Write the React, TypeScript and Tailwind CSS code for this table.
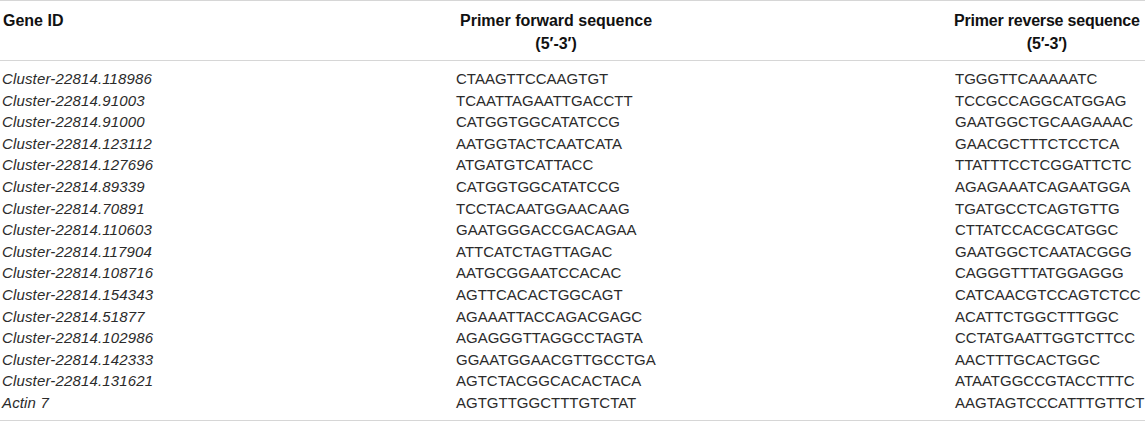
import React from "react";

const rows: [string, string, string][] = [
  ["Cluster-22814.118986", "CTAAGTTCCAAGTGT", "TGGGTTCAAAAATC"],
  ["Cluster-22814.91003", "TCAATTAGAATTGACCTT", "TCCGCCAGGCATGGAG"],
  ["Cluster-22814.91000", "CATGGTGGCATATCCG", "GAATGGCTGCAAGAAAC"],
  ["Cluster-22814.123112", "AATGGTACTCAATCATA", "GAACGCTTTCTCCTCA"],
  ["Cluster-22814.127696", "ATGATGTCATTACC", "TTATTTCCTCGGATTCTC"],
  ["Cluster-22814.89339", "CATGGTGGCATATCCG", "AGAGAAATCAGAATGGA"],
  ["Cluster-22814.70891", "TCCTACAATGGAACAAG", "TGATGCCTCAGTGTTG"],
  ["Cluster-22814.110603", "GAATGGGACCGACAGAA", "CTTATCCACGCATGGC"],
  ["Cluster-22814.117904", "ATTCATCTAGTTAGAC", "GAATGGCTCAATACGGG"],
  ["Cluster-22814.108716", "AATGCGGAATCCACAC", "CAGGGTTTATGGAGGG"],
  ["Cluster-22814.154343", "AGTTCACACTGGCAGT", "CATCAACGTCCAGTCTCC"],
  ["Cluster-22814.51877", "AGAAATTACCAGACGAGC", "ACATTCTGGCTTTGGC"],
  ["Cluster-22814.102986", "AGAGGGTTAGGCCTAGTA", "CCTATGAATTGGTCTTCC"],
  ["Cluster-22814.142333", "GGAATGGAACGTTGCCTGA", "AACTTTGCACTGGC"],
  ["Cluster-22814.131621", "AGTCTACGGCACACTACA", "ATAATGGCCGTACCTTTC"],
  ["Actin 7", "AGTGTTGGCTTTGTCTAT", "AAGTAGTCCCATTTGTTCT"],
];

export default function App() {
  return (
    <div
      className="w-[1145px] h-[422px] bg-white text-[15px] overflow-hidden"
      style={{ fontFamily: '"Liberation Sans", Arial, Helvetica, sans-serif' }}
    >
      <div className="border-t border-b border-[#d6d6d6] grid grid-cols-[456px_499px_1fr] h-[61px] pt-[8px] leading-[23px] text-[16px] font-bold text-[#111]">
        <div className="pl-[3px]">Gene ID</div>
        <div>
          <div className="ml-[4px] w-fit text-center">
            Primer forward sequence
            <br />
            (5′-3′)
          </div>
        </div>
        <div>
          <div className="ml-[-1px] w-fit text-center tracking-[-0.2px]">
            Primer reverse sequence
            <br />
            (5′-3′)
          </div>
        </div>
      </div>
      <div className="border-b border-[#d6d6d6] pt-[7px] pb-[6px] text-[#2b2b2b] leading-[21.6px]">
        {rows.map((r, i) => (
          <div key={i} className="grid grid-cols-[456px_499px_1fr]">
            <div className="pl-[2px] italic tracking-[0.15px]">{r[0]}</div>
            <div>{r[1]}</div>
            <div>{r[2]}</div>
          </div>
        ))}
      </div>
    </div>
  );
}
